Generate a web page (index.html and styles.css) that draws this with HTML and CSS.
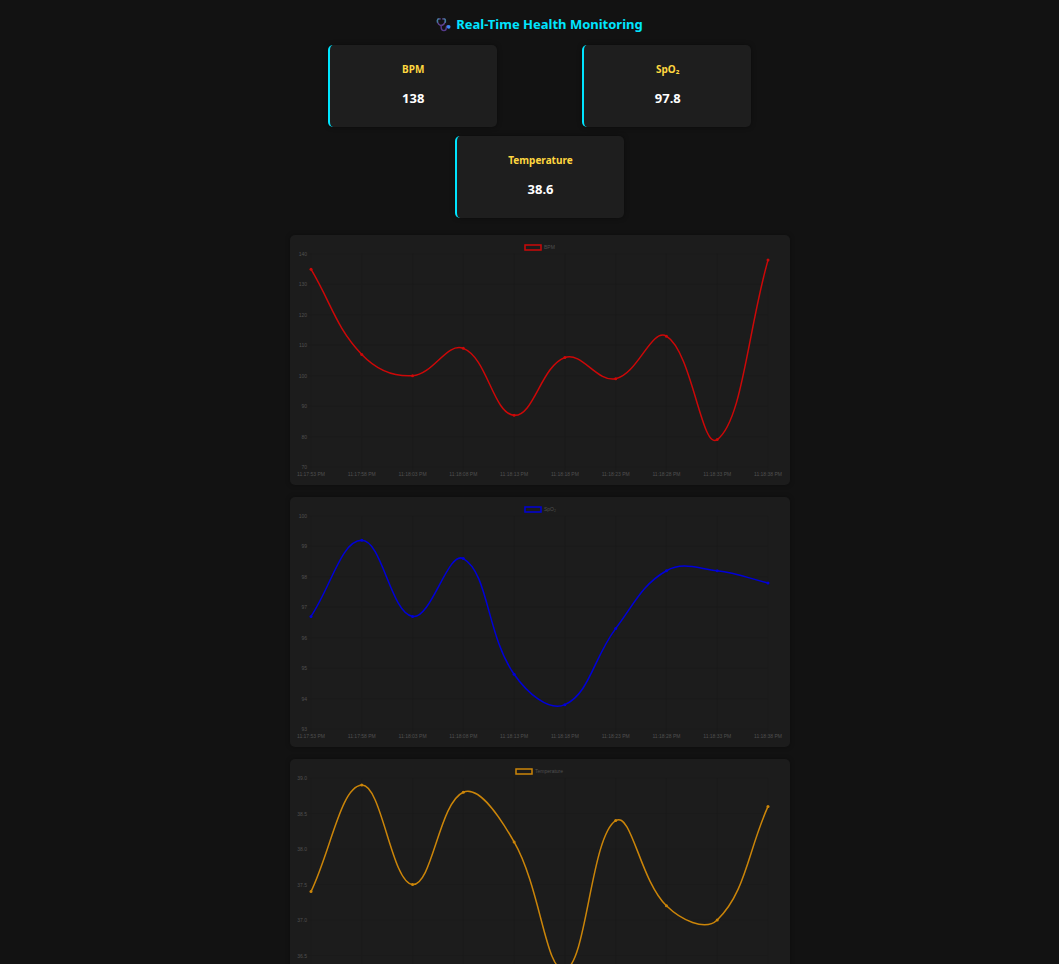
FILE: index.html
```html
<!DOCTYPE html>
<html lang="en">
<head>
<meta charset="utf-8">
<meta name="viewport" content="width=device-width, initial-scale=1">
<title>Real-Time Health Monitoring</title>
<link rel="stylesheet" href="styles.css">
</head>
<body>
<main class="page">
  <h1 class="title">
    <svg class="title-icon" viewBox="0 0 32 32" aria-hidden="true" fill="none" stroke-linecap="round">
      <path d="M9 4H5Q3 4 3 8Q4 17 11 18Q18 17 20 8Q20 4 18 4H14" stroke="#5f4390" stroke-width="3"/>
      <path d="M11 18V22Q11 29 17 29Q22 29 22 23Q22 18 26 19" stroke="#563a8c" stroke-width="3"/>
      <path d="M3 11V7Q3 4 6 4M20 11V7Q20 4 17 4" stroke="#3f7f9c" stroke-width="3"/>
      <circle cx="27" cy="21" r="4" fill="#3b88f0"/>
    </svg>
    <span>Real-Time Health Monitoring</span>
  </h1>
  <section class="cards">
    <article class="card"><h2 class="card-label">BPM</h2><p class="card-value">138</p></article>
    <article class="card"><h2 class="card-label">SpO₂</h2><p class="card-value">97.8</p></article>
    <article class="card"><h2 class="card-label">Temperature</h2><p class="card-value">38.6</p></article>
  </section>
  <section class="charts">
    <svg class="chart chart-bpm" viewBox="0 0 500 250" role="img" aria-label="BPM"></svg>
    <svg class="chart chart-spo2" viewBox="0 0 500 250" role="img" aria-label="SpO₂"></svg>
    <svg class="chart chart-temp" viewBox="0 0 500 250" role="img" aria-label="Temperature"></svg>
  </section>
</main>
<script src="charts.js"></script>
</body>
</html>
```
FILE: styles.css
```css
* { box-sizing: border-box; }

body {
  margin: 0;
  background: #121212;
  color: #fff;
  font-family: "Segoe UI", "Noto Sans", sans-serif;
}

.page {
  padding: 14px 0 20px 20px;
}

.title {
  display: flex;
  justify-content: center;
  align-items: center;
  gap: 5px;
  margin: 0 0 11px;
  color: #00e5ff;
  font-size: 13px;
  line-height: 20px;
}

.title-icon {
  width: 15px;
  height: 15px;
}

.cards {
  display: flex;
  flex-wrap: wrap;
  justify-content: space-around;
  gap: 9px;
  max-width: 500px;
  margin: 0 auto 17px;
}

.card {
  width: 169px;
  padding: 16px 10px 18px;
  border-left: 2px solid #00e5ff;
  border-radius: 5px;
  background: #1e1e1e;
  box-shadow: 0 0 5px rgba(0, 0, 0, 0.4);
  text-align: center;
}

.card-label {
  margin: 0 0 10px;
  color: #ffd740;
  font-size: 10px;
  line-height: 16px;
}

.card-value {
  margin: 0;
  font-size: 13px;
  font-weight: 700;
  line-height: 22px;
}

.charts {
  display: flex;
  flex-direction: column;
  gap: 12px;
  max-width: 500px;
  margin: 0 auto;
}

.chart {
  display: block;
  width: 100%;
  border-radius: 5px;
  background: #1c1c1c;
  box-shadow: 0 0 5px rgba(0, 0, 0, 0.3);
}

.chart-bpm { color: #cc0808; }
.chart-spo2 { color: #0000d8; }
.chart-temp { color: #cb8509; }

.chart text {
  fill: #505050;
  font-family: "Liberation Sans", Arial, sans-serif;
  font-size: 5px;
}

.chart .tick-x { text-anchor: middle; }
.chart .tick-y { text-anchor: end; }

.grid {
  stroke: #1a1a1a;
  stroke-width: 1;
  opacity: 0.5;
}

.line,
.legend-box {
  fill: none;
  stroke: currentColor;
  stroke-width: 1.5;
}

.point { fill: currentColor; }
```
FILE: charts.js
```javascript
const AREA = { left: 21, right: 478, top: 19, bottom: 232 };
const TENSION = 0.4;
const times = ["11:17:53 PM", "11:17:58 PM", "11:18:03 PM", "11:18:08 PM", "11:18:13 PM",
  "11:18:18 PM", "11:18:23 PM", "11:18:28 PM", "11:18:33 PM", "11:18:38 PM"];

const charts = [
  { target: ".chart-bpm", label: "BPM", min: 70, max: 140, step: 10, digits: 0, legendX: 235,
    data: [135, 107, 100, 109, 87, 106, 99, 113, 79, 138] },
  { target: ".chart-spo2", label: "SpO₂", min: 93, max: 100, step: 1, digits: 0, legendX: 235,
    data: [96.7, 99.2, 96.7, 98.6, 94.8, 93.8, 96.3, 98.2, 98.2, 97.8] },
  { target: ".chart-temp", label: "Temperature", min: 36, max: 39, step: 0.5, digits: 1, legendX: 226,
    data: [37.4, 38.9, 37.5, 38.8, 38.1, 36.3, 38.4, 37.2, 37.0, 38.6] }
];

// Smooth curve whose control points stay inside the plot area.
function curve(points) {
  const clamp = y => Math.min(AREA.bottom, Math.max(AREA.top, y));
  const controls = points.map((p, i) => {
    const a = points[i - 1] || p;
    const b = points[i + 1] || p;
    const before = Math.hypot(p.x - a.x, p.y - a.y);
    const after = Math.hypot(b.x - p.x, b.y - p.y);
    const fa = TENSION * before / (before + after);
    const fb = TENSION * after / (before + after);
    return {
      inX: p.x - fa * (b.x - a.x), inY: clamp(p.y - fa * (b.y - a.y)),
      outX: p.x + fb * (b.x - a.x), outY: clamp(p.y + fb * (b.y - a.y))
    };
  });
  let d = `M${points[0].x} ${points[0].y}`;
  for (let i = 1; i < points.length; i++) {
    const c = controls[i - 1];
    const n = controls[i];
    d += ` C${c.outX} ${c.outY} ${n.inX} ${n.inY} ${points[i].x} ${points[i].y}`;
  }
  return d;
}

for (const chart of charts) {
  const xAt = i => AREA.left + i * (AREA.right - AREA.left) / (times.length - 1);
  const yAt = v => AREA.bottom - (v - chart.min) / (chart.max - chart.min) * (AREA.bottom - AREA.top);
  const points = chart.data.map((v, i) => ({ x: xAt(i), y: yAt(v) }));
  let out = "";

  for (let v = chart.min; v <= chart.max; v += chart.step) {
    const y = yAt(v);
    out += `<path class="grid" d="M${AREA.left - 3} ${y}H${AREA.right}"/>`;
    out += `<text class="tick-y" x="17" y="${y + 2}">${v.toFixed(chart.digits)}</text>`;
  }
  times.forEach((time, i) => {
    out += `<path class="grid" d="M${xAt(i)} ${AREA.top}V${AREA.bottom + 3}"/>`;
    out += `<text class="tick-x" x="${xAt(i)}" y="241">${time}</text>`;
  });
  out += `<rect class="legend-box" x="${chart.legendX}" y="10" width="16" height="5"/>`;
  out += `<text x="${chart.legendX + 19}" y="14">${chart.label}</text>`;
  out += `<path class="line" d="${curve(points)}"/>`;
  for (const p of points) {
    out += `<circle class="point" cx="${p.x}" cy="${p.y}" r="1.5"/>`;
  }
  document.querySelector(chart.target).innerHTML = out;
}
```
